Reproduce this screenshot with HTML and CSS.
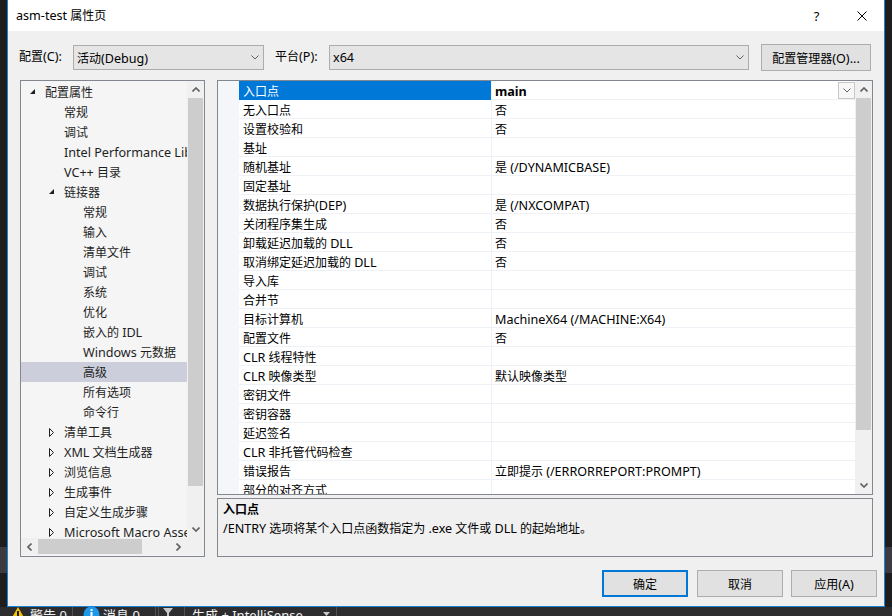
FILE: index.html
```html
<!DOCTYPE html>
<html>

<head>
    <meta charset="utf-8">
    <title>asm-test 属性页</title>
    <link rel="stylesheet" href="styles.css">
</head>

<body>
    <div class="desktop">
        <div class="edge"><div class="edge-band"></div></div>

        <div class="dialog">
            <div class="titlebar">
                <div class="title"><span class="en">asm-test</span> 属性页</div>
                <div class="caption-btn">?</div>
                <div class="caption-btn">
                    <svg width="10" height="10" viewBox="0 0 10 10"><path d="M0.5 0.5 L9.5 9.5 M9.5 0.5 L0.5 9.5" stroke="#000" stroke-width="1" fill="none"/></svg>
                </div>
            </div>

            <div class="content">
                <div class="config-row">
                    <span class="label">配置<span class="en">(C):</span></span>
                    <div class="combo combo-config">
                        <span class="combo-text">活动<span class="en">(Debug)</span></span>
                        <svg class="chevron" width="8" height="5" viewBox="0 0 8 5"><path d="M0.5 0.5 L4 4 L7.5 0.5" stroke="#606060" fill="none"/></svg>
                    </div>
                    <span class="label label-platform">平台<span class="en">(P):</span></span>
                    <div class="combo combo-platform">
                        <span class="combo-text en">x64</span>
                        <svg class="chevron" width="8" height="5" viewBox="0 0 8 5"><path d="M0.5 0.5 L4 4 L7.5 0.5" stroke="#606060" fill="none"/></svg>
                    </div>
                    <button class="button manager-btn">配置管理器<span class="en">(O)...</span></button>
                </div>

                <div class="main">
                    <!-- left tree -->
                    <div class="tree">
                        <div class="tree-top">
                            <div class="tree-items">
                                <div class="tree-item lvl0"><span class="toggle"><svg width="6" height="6" viewBox="0 0 6 6"><polygon points="5,0 5,5 0,5" fill="#1e1e1e"/></svg></span>配置属性</div>
                                <div class="tree-item lvl1"><span class="toggle"></span>常规</div>
                                <div class="tree-item lvl1"><span class="toggle"></span>调试</div>
                                <div class="tree-item lvl1"><span class="toggle"></span><span class="en">Intel Performance Libraries</span></div>
                                <div class="tree-item lvl1"><span class="toggle"></span><span class="en">VC++</span>&nbsp;目录</div>
                                <div class="tree-item lvl1"><span class="toggle"><svg width="6" height="6" viewBox="0 0 6 6"><polygon points="5,0 5,5 0,5" fill="#1e1e1e"/></svg></span>链接器</div>
                                <div class="tree-item lvl2"><span class="toggle"></span>常规</div>
                                <div class="tree-item lvl2"><span class="toggle"></span>输入</div>
                                <div class="tree-item lvl2"><span class="toggle"></span>清单文件</div>
                                <div class="tree-item lvl2"><span class="toggle"></span>调试</div>
                                <div class="tree-item lvl2"><span class="toggle"></span>系统</div>
                                <div class="tree-item lvl2"><span class="toggle"></span>优化</div>
                                <div class="tree-item lvl2"><span class="toggle"></span>嵌入的&nbsp;<span class="en">IDL</span></div>
                                <div class="tree-item lvl2"><span class="toggle"></span><span class="en">Windows</span>&nbsp;元数据</div>
                                <div class="tree-item lvl2 selected"><span class="toggle"></span>高级</div>
                                <div class="tree-item lvl2"><span class="toggle"></span>所有选项</div>
                                <div class="tree-item lvl2"><span class="toggle"></span>命令行</div>
                                <div class="tree-item lvl1"><span class="toggle"><svg width="6" height="9" viewBox="0 0 6 9"><polygon points="0.5,0.5 4.5,4.5 0.5,8.5" fill="none" stroke="#1e1e1e"/></svg></span>清单工具</div>
                                <div class="tree-item lvl1"><span class="toggle"><svg width="6" height="9" viewBox="0 0 6 9"><polygon points="0.5,0.5 4.5,4.5 0.5,8.5" fill="none" stroke="#1e1e1e"/></svg></span><span class="en">XML</span>&nbsp;文档生成器</div>
                                <div class="tree-item lvl1"><span class="toggle"><svg width="6" height="9" viewBox="0 0 6 9"><polygon points="0.5,0.5 4.5,4.5 0.5,8.5" fill="none" stroke="#1e1e1e"/></svg></span>浏览信息</div>
                                <div class="tree-item lvl1"><span class="toggle"><svg width="6" height="9" viewBox="0 0 6 9"><polygon points="0.5,0.5 4.5,4.5 0.5,8.5" fill="none" stroke="#1e1e1e"/></svg></span>生成事件</div>
                                <div class="tree-item lvl1"><span class="toggle"><svg width="6" height="9" viewBox="0 0 6 9"><polygon points="0.5,0.5 4.5,4.5 0.5,8.5" fill="none" stroke="#1e1e1e"/></svg></span>自定义生成步骤</div>
                                <div class="tree-item lvl1"><span class="toggle"><svg width="6" height="9" viewBox="0 0 6 9"><polygon points="0.5,0.5 4.5,4.5 0.5,8.5" fill="none" stroke="#1e1e1e"/></svg></span><span class="en">Microsoft Macro Assembler</span></div>
                            </div>
                            <div class="vscroll tree-vscroll">
                                <div class="scroll-arrow"><svg width="8" height="5" viewBox="0 0 8 5"><path d="M0.5 4.5 L4 1 L7.5 4.5" stroke="#606060" stroke-width="1.6" fill="none"/></svg></div>
                                <div class="thumb"></div>
                                <div class="scroll-fill"></div>
                                <div class="scroll-arrow"><svg width="8" height="5" viewBox="0 0 8 5"><path d="M0.5 0.5 L4 4 L7.5 0.5" stroke="#606060" stroke-width="1.6" fill="none"/></svg></div>
                            </div>
                        </div>
                        <div class="tree-bottom">
                            <div class="hscroll">
                                <div class="scroll-arrow"><svg width="5" height="8" viewBox="0 0 5 8"><path d="M4.5 0.5 L1 4 L4.5 7.5" stroke="#606060" stroke-width="1.6" fill="none"/></svg></div>
                                <div class="hthumb"></div>
                                <div class="scroll-fill"></div>
                                <div class="scroll-arrow"><svg width="5" height="8" viewBox="0 0 5 8"><path d="M0.5 0.5 L4 4 L0.5 7.5" stroke="#606060" stroke-width="1.6" fill="none"/></svg></div>
                            </div>
                            <div class="corner"></div>
                        </div>
                    </div>

                    <!-- property grid + description -->
                    <div class="right">
                        <div class="grid">
                            <div class="grid-rows">
                                <div class="grid-row selected">
                                    <div class="name">入口点</div>
                                    <div class="value"><b class="en">main</b>
                                        <span class="drop"><svg width="8" height="5" viewBox="0 0 8 5"><path d="M0.5 0.5 L4 4 L7.5 0.5" stroke="#606060" fill="none"/></svg></span>
                                    </div>
                                </div>
                                <div class="grid-row"><div class="name">无入口点</div><div class="value">否</div></div>
                                <div class="grid-row"><div class="name">设置校验和</div><div class="value">否</div></div>
                                <div class="grid-row"><div class="name">基址</div><div class="value"></div></div>
                                <div class="grid-row"><div class="name">随机基址</div><div class="value">是&nbsp;<span class="en">(/DYNAMICBASE)</span></div></div>
                                <div class="grid-row"><div class="name">固定基址</div><div class="value"></div></div>
                                <div class="grid-row"><div class="name">数据执行保护<span class="en">(DEP)</span></div><div class="value">是&nbsp;<span class="en">(/NXCOMPAT)</span></div></div>
                                <div class="grid-row"><div class="name">关闭程序集生成</div><div class="value">否</div></div>
                                <div class="grid-row"><div class="name">卸载延迟加载的 <span class="en">DLL</span></div><div class="value">否</div></div>
                                <div class="grid-row"><div class="name">取消绑定延迟加载的 <span class="en">DLL</span></div><div class="value">否</div></div>
                                <div class="grid-row"><div class="name">导入库</div><div class="value"></div></div>
                                <div class="grid-row"><div class="name">合并节</div><div class="value"></div></div>
                                <div class="grid-row"><div class="name">目标计算机</div><div class="value"><span class="en">MachineX64 (/MACHINE:X64)</span></div></div>
                                <div class="grid-row"><div class="name">配置文件</div><div class="value">否</div></div>
                                <div class="grid-row"><div class="name"><span class="en">CLR</span> 线程特性</div><div class="value"></div></div>
                                <div class="grid-row"><div class="name"><span class="en">CLR</span> 映像类型</div><div class="value">默认映像类型</div></div>
                                <div class="grid-row"><div class="name">密钥文件</div><div class="value"></div></div>
                                <div class="grid-row"><div class="name">密钥容器</div><div class="value"></div></div>
                                <div class="grid-row"><div class="name">延迟签名</div><div class="value"></div></div>
                                <div class="grid-row"><div class="name"><span class="en">CLR</span> 非托管代码检查</div><div class="value"></div></div>
                                <div class="grid-row"><div class="name">错误报告</div><div class="value">立即提示&nbsp;<span class="en">(/ERRORREPORT:PROMPT)</span></div></div>
                                <div class="grid-row"><div class="name">部分的对齐方式</div><div class="value"></div></div>
                            </div>
                            <div class="vscroll grid-vscroll">
                                <div class="scroll-arrow"><svg width="8" height="5" viewBox="0 0 8 5"><path d="M0.5 4.5 L4 1 L7.5 4.5" stroke="#606060" stroke-width="1.6" fill="none"/></svg></div>
                                <div class="thumb"></div>
                                <div class="scroll-fill"></div>
                                <div class="scroll-arrow"><svg width="8" height="5" viewBox="0 0 8 5"><path d="M0.5 0.5 L4 4 L7.5 0.5" stroke="#606060" stroke-width="1.6" fill="none"/></svg></div>
                            </div>
                        </div>

                        <div class="desc">
                            <div class="desc-title">入口点</div>
                            <div class="desc-text"><span class="en">/ENTRY</span> 选项将某个入口点函数指定为 <span class="en">.exe</span> 文件或 <span class="en">DLL</span> 的起始地址。</div>
                        </div>
                    </div>
                </div>

                <div class="buttons">
                    <button class="button dlg-btn default">确定</button>
                    <button class="button dlg-btn">取消</button>
                    <button class="button dlg-btn last">应用<span class="en">(A)</span></button>
                </div>
            </div>
        </div>

        <div class="edge"><div class="edge-band"></div></div>
    </div>

    <div class="statusbar">
        <div class="status-inner">
            <div class="status-item warn">
                <svg width="16" height="14" viewBox="0 0 16 14"><polygon points="8,0 16,14 0,14" fill="#f5c400"/><rect x="7" y="4" width="2" height="6" fill="#1e1e1e"/></svg>
                <span>警告 0</span>
            </div>
            <div class="status-sep"></div>
            <div class="status-item info">
                <svg width="17" height="17" viewBox="0 0 17 17"><circle cx="8.5" cy="8.5" r="8" fill="#1c97ea"/><rect x="7.5" y="3" width="2" height="2" fill="#fff"/><rect x="7.5" y="6" width="2" height="7" fill="#fff"/></svg>
                <span>消息 0</span>
            </div>
            <div class="status-sep wide"></div>
            <div class="status-item filter">
                <svg width="10" height="12" viewBox="0 0 10 12"><polygon points="0,0 10,0 6,5 6,12 4,12 4,5" fill="#c8c8c8"/></svg>
            </div>
            <div class="status-sep"></div>
            <div class="status-item build">
                <span>生成 + IntelliSense</span>
                <svg class="build-arrow" width="7" height="4" viewBox="0 0 7 4"><polygon points="0,0 7,0 3.5,4" fill="#c8c8c8"/></svg>
            </div>
        </div>
    </div>
</body>

</html>
```

FILE: styles.css
```css
* {
    box-sizing: border-box;
}

body {
    margin: 0;
    width: 892px;
    height: 616px;
    overflow: hidden;
    background: #1e1e1e;
    font-family: "Segoe UI", "Noto Sans", "Noto Sans CJK SC", sans-serif;
    font-size: 12px;
    color: #000;
}

/* latin runs are a little wider in the original UI font */
.en {
    font-size: 12.6px;
}

.desktop {
    display: flex;
    height: 607px;
}

.edge {
    width: 7px;
    background: #1e1e1e;
}

.edge-band {
    margin-top: 547px;
    height: 26px;
    background: #3c3c40;
}

/* dialog window */
.dialog {
    width: 878px;
    display: flex;
    flex-direction: column;
    background: #f0f0f0;
    border: 1px solid #1883d7;
    border-top: none;
}

.titlebar {
    height: 31px;
    background: #fff;
    display: flex;
    align-items: center;
    padding-left: 8px;
}

.title {
    flex: 1;
    padding-bottom: 1px;
}

.caption-btn {
    width: 45px;
    height: 31px;
    display: flex;
    align-items: center;
    justify-content: center;
    font-size: 13px;
}

.content {
    flex: 1;
    padding: 14px 7px 0 12px;
}

.config-row {
    display: flex;
    align-items: flex-start;
    height: 26px;
}

.label {
    width: 54px;
    height: 25px;
    line-height: 24px;
    margin-left: -1px;
}

.label-platform {
    margin-left: 11px;
}

.combo {
    height: 25px;
    display: flex;
    align-items: center;
    background: #e5e5e5;
    border: 1px solid #acacac;
    padding: 0 4px 0 3px;
}

.combo-config {
    width: 191px;
}

.combo-platform {
    width: 420px;
}

.combo-text {
    flex: 1;
}

.button {
    font-family: inherit;
    font-size: 12px;
    color: #000;
    background: #e1e1e1;
    border: 1px solid #adadad;
    padding: 0;
}

.manager-btn {
    width: 110px;
    height: 27px;
    margin-left: 12px;
    margin-top: -1px;
}

.main {
    display: flex;
    margin-top: 9px;
    height: 477px;
}

/* tree */
.tree {
    width: 185px;
    height: 477px;
    border: 1px solid #828790;
    background: #f5f5f5;
    display: flex;
    flex-direction: column;
}

.tree-top {
    display: flex;
    height: 457px;
}

.tree-items {
    flex: 1;
    overflow: hidden;
    padding-top: 1px;
}

.tree-item {
    display: flex;
    align-items: center;
    height: 20px;
    white-space: nowrap;
    color: #1e1e1e;
}

.tree-item.lvl0 {
    padding-left: 9px;
}

.tree-item.lvl1 {
    padding-left: 28px;
}

.tree-item.lvl2 {
    padding-left: 47px;
}

.tree-item.selected {
    background: #cccedb;
}

.toggle {
    width: 15px;
    flex-shrink: 0;
    display: flex;
    align-items: center;
}

.vscroll {
    width: 17px;
    background: #f0f0f0;
    display: flex;
    flex-direction: column;
}

.scroll-arrow {
    width: 17px;
    height: 17px;
    display: flex;
    align-items: center;
    justify-content: center;
    flex-shrink: 0;
}

.scroll-fill {
    flex: 1;
}

.thumb {
    margin: 0 1px;
    background: #cdcdcd;
}

.tree-vscroll .thumb {
    height: 388px;
}

.grid-vscroll .thumb {
    height: 332px;
}

.tree-bottom {
    display: flex;
    height: 17px;
}

.hscroll {
    flex: 1;
    display: flex;
    background: #f0f0f0;
}

.hthumb {
    width: 104px;
    margin: 1px 0;
    background: #cdcdcd;
}

.corner {
    width: 17px;
    background: #f0f0f0;
}

/* property grid */
.right {
    margin-left: 12px;
    width: 656px;
    display: flex;
    flex-direction: column;
}

.grid {
    height: 415px;
    border: 1px solid #828790;
    background: #fff;
    display: flex;
}

.grid-rows {
    flex: 1;
    overflow: hidden;
    padding-left: 21px;
    background: #f4f6fa;
}

.grid-row {
    display: flex;
    height: 19px;
    background: #fff;
}

.grid-row .name {
    width: 252px;
    height: 19px;
    padding-left: 4px;
    padding-top: 2px;
    line-height: 18px;
    border-bottom: 1px solid #eef1f5;
    white-space: nowrap;
    overflow: hidden;
}

.grid-row .value {
    flex: 1;
    position: relative;
    height: 19px;
    padding-left: 3px;
    padding-top: 2px;
    line-height: 18px;
    border-left: 1px solid #eef1f5;
    border-bottom: 1px solid #eef1f5;
    white-space: nowrap;
    overflow: hidden;
}

.grid-row.selected .name {
    background: #0078d7;
    color: #fff;
    border-bottom-color: #0078d7;
}

.drop {
    position: absolute;
    right: 0;
    top: 1px;
    width: 17px;
    height: 17px;
    border: 1px solid #c8c8c8;
    background: #f7f7f7;
    display: flex;
    align-items: center;
    justify-content: center;
}

.desc {
    margin-top: 3px;
    height: 59px;
    border: 1px solid #828790;
    padding: 1px 5px 0;
}

.desc-title {
    font-weight: bold;
    line-height: 19px;
}

.desc-text {
    line-height: 19px;
}

.buttons {
    display: flex;
    justify-content: flex-end;
    margin-top: 13px;
}

.dlg-btn {
    width: 86px;
    height: 27px;
    margin-left: 9px;
}

.dlg-btn.last {
    margin-left: 8px;
}

.dlg-btn.default {
    border: 2px solid #0078d7;
}

/* status bar of the IDE behind the dialog */
.statusbar {
    height: 9px;
    overflow: hidden;
    background: #2d2d30;
}

.status-inner {
    display: flex;
    align-items: center;
    margin-top: -4px;
    height: 22px;
    color: #f1f1f1;
    font-size: 13px;
}

.status-item {
    display: flex;
    align-items: center;
    height: 22px;
}

.warn {
    padding-left: 10px;
    width: 72px;
}

.warn span {
    margin-left: 4px;
}

.info {
    padding-left: 10px;
    width: 82px;
}

.info span {
    margin-left: 3px;
}

.status-sep {
    width: 1px;
    height: 22px;
    background: #505055;
}

.status-sep.wide {
    width: 4px;
    border-left: 1px solid #505055;
    border-right: 1px solid #505055;
    background: transparent;
}

.filter {
    padding-left: 4px;
    width: 25px;
}

.build {
    padding-left: 7px;
    width: 152px;
    border-right: 1px solid #505055;
}

.build-arrow {
    margin-left: auto;
    margin-right: 6px;
}
```
